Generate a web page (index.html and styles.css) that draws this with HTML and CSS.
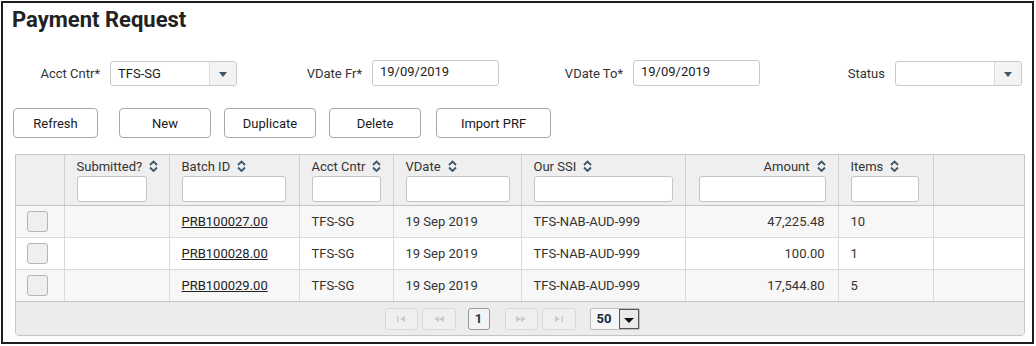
FILE: index.html
```html
<!DOCTYPE html>
<html>
    <head>
        <title>Payment Request</title>
        <link rel="stylesheet" href="styles.css">
    </head>
    <body>
        <div class="frame">
            <h1>Payment Request</h1>

            <div class="filters">
                <label>Acct Cntr*</label>
                <div class="select">
                    <span class="select-value">TFS-SG</span>
                    <span class="select-btn"><i class="caret"></i></span>
                </div>

                <label>VDate Fr*</label>
                <input class="text-input" type="text" value="19/09/2019">

                <label>VDate To*</label>
                <input class="text-input" type="text" value="19/09/2019">

                <label>Status</label>
                <div class="select">
                    <span class="select-value"></span>
                    <span class="select-btn"><i class="caret"></i></span>
                </div>
            </div>

            <div class="toolbar">
                <button type="button" class="btn btn-refresh">Refresh</button>
                <button type="button" class="btn">New</button>
                <button type="button" class="btn">Duplicate</button>
                <button type="button" class="btn btn-delete">Delete</button>
                <button type="button" class="btn btn-import">Import PRF</button>
            </div>

            <div class="grid">
                <table>
                    <colgroup>
                        <col class="c-chk">
                        <col class="c-sub">
                        <col class="c-batch">
                        <col class="c-acct">
                        <col class="c-vdate">
                        <col class="c-ssi">
                        <col class="c-amt">
                        <col class="c-items">
                        <col>
                    </colgroup>
                    <thead>
                        <tr>
                            <th></th>
                            <th>Submitted?<svg class="sort" width="9" height="12" viewBox="0 0 9 12"><path d="M1 5 L4.5 1.5 L8 5 M1 7.5 L4.5 11 L8 7.5"/></svg>
                                <input class="col-filter f-sub" type="text"></th>
                            <th>Batch ID<svg class="sort" width="9" height="12" viewBox="0 0 9 12"><path d="M1 5 L4.5 1.5 L8 5 M1 7.5 L4.5 11 L8 7.5"/></svg>
                                <input class="col-filter f-batch" type="text"></th>
                            <th>Acct Cntr<svg class="sort" width="9" height="12" viewBox="0 0 9 12"><path d="M1 5 L4.5 1.5 L8 5 M1 7.5 L4.5 11 L8 7.5"/></svg>
                                <input class="col-filter f-acct" type="text"></th>
                            <th>VDate<svg class="sort" width="9" height="12" viewBox="0 0 9 12"><path d="M1 5 L4.5 1.5 L8 5 M1 7.5 L4.5 11 L8 7.5"/></svg>
                                <input class="col-filter f-vdate" type="text"></th>
                            <th>Our SSI<svg class="sort" width="9" height="12" viewBox="0 0 9 12"><path d="M1 5 L4.5 1.5 L8 5 M1 7.5 L4.5 11 L8 7.5"/></svg>
                                <input class="col-filter f-ssi" type="text"></th>
                            <th class="num">Amount<svg class="sort" width="9" height="12" viewBox="0 0 9 12"><path d="M1 5 L4.5 1.5 L8 5 M1 7.5 L4.5 11 L8 7.5"/></svg>
                                <input class="col-filter f-amt" type="text"></th>
                            <th>Items<svg class="sort" width="9" height="12" viewBox="0 0 9 12"><path d="M1 5 L4.5 1.5 L8 5 M1 7.5 L4.5 11 L8 7.5"/></svg>
                                <input class="col-filter f-items" type="text"></th>
                            <th></th>
                        </tr>
                    </thead>
                    <tbody>
                        <tr class="odd">
                            <td class="chk-cell"><span class="chk"></span></td>
                            <td></td>
                            <td><a href="#">PRB100027.00</a></td>
                            <td>TFS-SG</td>
                            <td>19 Sep 2019</td>
                            <td>TFS-NAB-AUD-999</td>
                            <td class="num">47,225.48</td>
                            <td>10</td>
                            <td></td>
                        </tr>
                        <tr>
                            <td class="chk-cell"><span class="chk"></span></td>
                            <td></td>
                            <td><a href="#">PRB100028.00</a></td>
                            <td>TFS-SG</td>
                            <td>19 Sep 2019</td>
                            <td>TFS-NAB-AUD-999</td>
                            <td class="num">100.00</td>
                            <td>1</td>
                            <td></td>
                        </tr>
                        <tr class="odd">
                            <td class="chk-cell"><span class="chk"></span></td>
                            <td></td>
                            <td><a href="#">PRB100029.00</a></td>
                            <td>TFS-SG</td>
                            <td>19 Sep 2019</td>
                            <td>TFS-NAB-AUD-999</td>
                            <td class="num">17,544.80</td>
                            <td>5</td>
                            <td></td>
                        </tr>
                    </tbody>
                </table>

                <div class="paginator">
                    <span class="pg-btn pg-first">
                        <svg width="10" height="8" viewBox="0 0 10 8"><rect x="1" y="1" width="1.5" height="6"/><path d="M9 1 L4 4 L9 7 Z"/></svg>
                    </span>
                    <span class="pg-btn pg-prev">
                        <svg width="12" height="8" viewBox="0 0 12 8"><path d="M6 1 L1 4 L6 7 Z M11 1 L6 4 L11 7 Z"/></svg>
                    </span>
                    <span class="pg-current">1</span>
                    <span class="pg-btn pg-next">
                        <svg width="12" height="8" viewBox="0 0 12 8"><path d="M1 1 L6 4 L1 7 Z M6 1 L11 4 L6 7 Z"/></svg>
                    </span>
                    <span class="pg-btn pg-last">
                        <svg width="10" height="8" viewBox="0 0 10 8"><path d="M1 1 L6 4 L1 7 Z"/><rect x="7.5" y="1" width="1.5" height="6"/></svg>
                    </span>
                    <div class="pg-size">
                        <span class="pg-size-value">50</span>
                        <span class="pg-size-btn"><i class="pg-caret"></i></span>
                    </div>
                </div>
            </div>
        </div>
    </body>
</html>
```

FILE: styles.css
```css
* {
    box-sizing: border-box;
}

body {
    margin: 0;
    font-family: Roboto, "Liberation Sans", Arial, sans-serif;
    font-size: 13px;
    color: #333;
}

.frame {
    width: 1033px;
    height: 343px;
    margin: 1px;
    border: 2px solid #1e1e1e;
}

h1 {
    margin: 0;
    padding: 4px 0 0 9px;
    font-size: 22px;
    line-height: 26px;
    font-weight: bold;
    color: #222;
}

/* filter row */

.filters {
    display: grid;
    grid-template-columns: 97px 127px 115px 127px 114px 127px 115px 127px;
    column-gap: 10px;
    align-items: center;
    height: 28px;
    margin-top: 26px;
}

.filters label {
    text-align: right;
    color: #333;
}

.select {
    display: flex;
    height: 25px;
    border: 1px solid #c9c9c9;
    border-radius: 3px;
    background: #fff;
}

.select-value {
    flex: 1;
    padding-left: 7px;
    line-height: 23px;
    color: #1a1a1a;
}

.select-btn {
    display: flex;
    align-items: center;
    justify-content: center;
    width: 27px;
    border-left: 1px solid #dcdcdc;
    background: #f3f3f3;
    border-radius: 0 3px 3px 0;
}

.caret {
    border-left: 4px solid transparent;
    border-right: 4px solid transparent;
    border-top: 5px solid #3d5566;
    margin-top: 2px;
}

.text-input {
    height: 26px;
    border: 1px solid #c9c9c9;
    border-radius: 3px;
    padding: 0 7px 4px;
    font-family: inherit;
    font-size: 13px;
    color: #222;
}

/* buttons */

.toolbar {
    display: flex;
    gap: 13px;
    margin-top: 21px;
    padding-left: 10px;
}

.btn {
    width: 92px;
    height: 30px;
    border: 1px solid #a9a9a9;
    border-radius: 4px;
    background: #fff;
    font-family: inherit;
    font-size: 13px;
    color: #1a1a1a;
}

.btn-refresh {
    width: 85px;
    margin-right: 8px;
}

.btn-delete {
    margin-right: 2px;
}

.btn-import {
    width: 115px;
}

/* grid */

.grid {
    width: 1010px;
    margin: 16px 0 0 12px;
    border: 1px solid #c4c4c4;
    border-radius: 0 0 4px 4px;
    overflow: hidden;
}

table {
    width: 100%;
    border-collapse: collapse;
    table-layout: fixed;
}

.c-chk { width: 48px; }
.c-sub { width: 105px; }
.c-batch { width: 130px; }
.c-acct { width: 94px; }
.c-vdate { width: 128px; }
.c-ssi { width: 164px; }
.c-amt { width: 153px; }
.c-items { width: 95px; }

th {
    background: #efefef;
    text-align: left;
    vertical-align: top;
    font-weight: normal;
    line-height: 16px;
    padding: 4px 0 3px 12px;
    border-right: 1px solid #cfcfcf;
    border-bottom: 1px solid #c4c4c4;
    color: #333;
    height: 50px;
}

th.num {
    text-align: right;
    padding-right: 12px;
}

.sort {
    margin-left: 7px;
    vertical-align: -1px;
    fill: none;
    stroke: #3d5566;
    stroke-width: 1.8;
}

.col-filter {
    display: block;
    height: 26px;
    margin-top: 1px;
    border: 1px solid #c4c4c4;
    border-radius: 3px;
    background: #fff;
}

th.num .col-filter {
    margin-left: auto;
}

.f-sub { width: 70px; }
.f-batch { width: 104px; }
.f-acct { width: 69px; }
.f-vdate { width: 104px; }
.f-ssi { width: 139px; }
.f-amt { width: 127px; }
.f-items { width: 68px; }

td {
    height: 32px;
    padding: 0 12px;
    border-right: 1px solid #dadada;
    border-bottom: 1px solid #dadada;
    color: #333;
    white-space: nowrap;
}

tr.odd td {
    background: #f7f7f7;
}

td.num {
    text-align: right;
    padding-right: 13px;
}

td.chk-cell {
    padding: 0 0 0 11px;
}

.chk {
    display: block;
    width: 21px;
    height: 21px;
    border: 1px solid #b5b5b5;
    border-radius: 3px;
    background: #efefef;
}

td a {
    color: #222;
    text-decoration: underline;
}

th:last-child,
td:last-child {
    border-right: none;
}

tbody tr:last-child td {
    border-bottom: 1px solid #c4c4c4;
}

/* paginator */

.paginator {
    display: flex;
    align-items: center;
    justify-content: center;
    height: 33px;
    padding-right: 16px;
    background: #ececec;
}

.pg-btn {
    display: flex;
    align-items: center;
    justify-content: center;
    width: 33px;
    height: 22px;
    border: 1px solid #d9d9d9;
    border-radius: 3px;
    background: #efefef;
    fill: #c3cad1;
}

.pg-prev,
.pg-last {
    width: 34px;
    margin-left: 4px;
}

.pg-current {
    width: 22px;
    height: 22px;
    margin: 0 15px 0 12px;
    border: 1px solid #9a9a9a;
    border-radius: 3px;
    background: #f4f4f4;
    text-align: center;
    line-height: 20px;
    font-weight: bold;
    color: #23384a;
}

.pg-size {
    display: flex;
    width: 50px;
    height: 22px;
    margin-left: 14px;
    border: 1px solid #bdbdbd;
    border-radius: 2px;
    background: #f6f6f6;
}

.pg-size-value {
    flex: 1;
    padding-left: 6px;
    line-height: 20px;
    font-weight: bold;
    color: #1a2a3a;
}

.pg-size-btn {
    display: flex;
    align-items: center;
    justify-content: center;
    width: 20px;
    border: 1px solid #555;
    background: #eaeaea;
}

.pg-caret {
    border-left: 5px solid transparent;
    border-right: 5px solid transparent;
    border-top: 5px solid #111;
    margin-top: 3px;
}
```
